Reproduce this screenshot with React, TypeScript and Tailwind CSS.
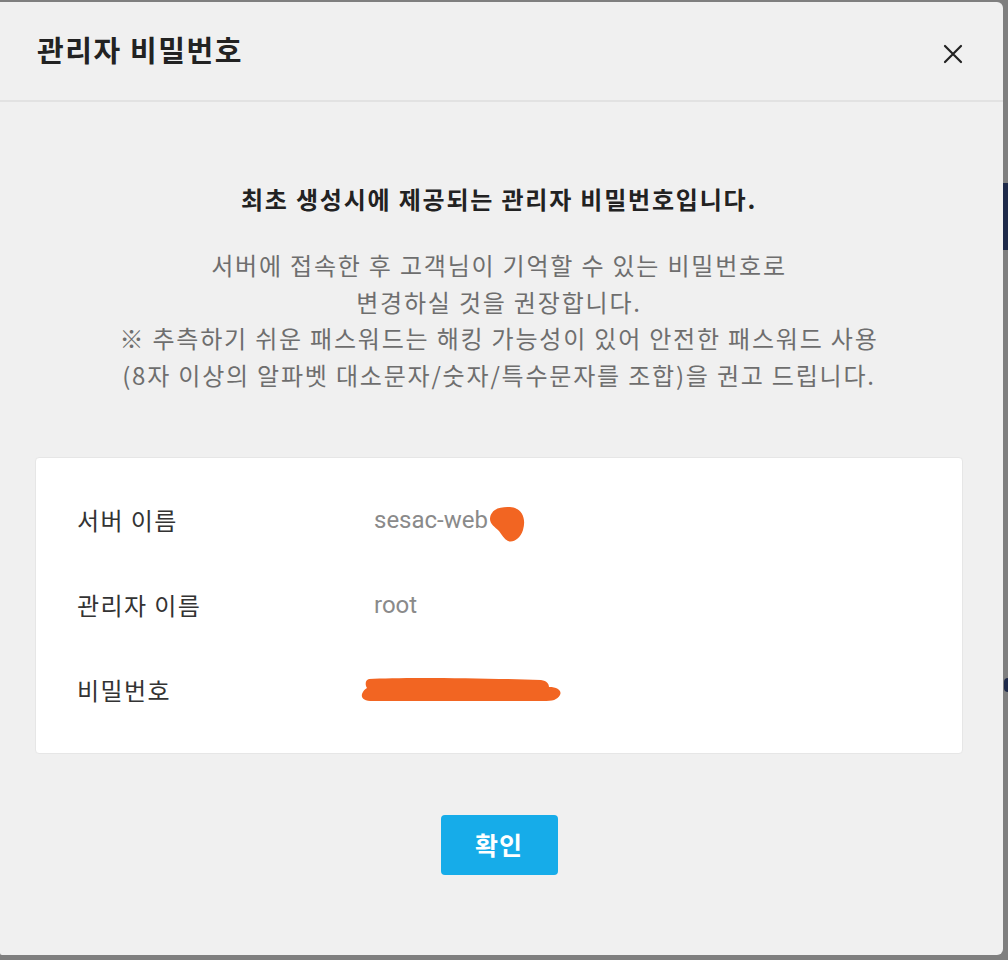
import React from "react";

const KR = { fontFamily: '"Noto Sans CJK KR", "Noto Sans", sans-serif' };
const RB = { fontFamily: 'Roboto, "Noto Sans CJK KR", sans-serif' };

function Row({ label, children }: { label: string; children: React.ReactNode }) {
  return (
    <div className="flex h-[85px] items-center">
      <div className="w-[297px] text-[24px] tracking-[1.4px] text-[#333333]" style={KR}>
        {label}
      </div>
      <div className="relative flex-1 text-[24px] text-[#8a8a8a]" style={RB}>
        {children}
      </div>
    </div>
  );
}

export default function App() {
  return (
    <div className="relative h-[960px] w-[1008px] overflow-hidden bg-[#7f7f7f]">
      {/* hints of the page behind */}
      <div className="absolute right-0 top-[183px] h-[67px] w-[5px] bg-[#1e2a4a]" />
      <div className="absolute right-0 top-[678px] h-[14px] w-[4px] rounded-l-full bg-[#1e2a4a]" />
      <div className="mt-[2px] flex h-[953px] w-[1003px] flex-col rounded-r-[6px] rounded-bl-[2px] bg-[#f0f0f0]">
        <div className="flex h-[100px] shrink-0 items-center justify-between border-b-2 border-[#e2e2e2] pl-[37px] pr-[40px]">
          <div className="pb-[2px] text-[29px] font-bold tracking-[1.6px] text-[#222222]" style={KR}>
            관리자 비밀번호
          </div>
          <svg width="20" height="20" viewBox="0 0 20 20" className="mt-[6px]">
            <path d="M2 2 L18 18 M18 2 L2 18" stroke="#222" strokeWidth="2.2" strokeLinecap="round" />
          </svg>
        </div>
        <div className="flex flex-col items-center pl-[35px] pr-[40px] pt-[79px]">
          <div className="h-[36px] text-[24px] font-bold leading-[36px] tracking-[1.8px] text-[#222222]" style={KR}>
            최초 생성시에 제공되는 관리자 비밀번호입니다.
          </div>
          <div className="mt-[30px] text-center text-[24px] leading-[36.5px] tracking-[1.8px] text-[#6e6e6e]" style={KR}>
            <div>서버에 접속한 후 고객님이 기억할 수 있는 비밀번호로</div>
            <div>변경하실 것을 권장합니다.</div>
            <div>※ 추측하기 쉬운 패스워드는 해킹 가능성이 있어 안전한 패스워드 사용</div>
            <div>(8자 이상의 알파벳 대소문자/숫자/특수문자를 조합)을 권고 드립니다.</div>
          </div>
          <div className="mt-[64px] w-full rounded-[4px] border border-[#e6e6e6] bg-white pb-[21px] pl-[41px] pt-[19px]">
            <Row label="서버 이름">
              <span>sesac-web</span>
              <svg className="absolute left-[112px] top-[2px]" width="42" height="42" viewBox="0 0 42 42">
                <path
                  d="M6 9 C9 3 22 2 29 4 C37 7 40 16 37 26 C34 35 27 39 22 37 C18 35 16 31 13 27 C9 23 4 20 4 15 C4 12 5 10 6 9 Z"
                  fill="#f26522"
                />
              </svg>
            </Row>
            <Row label="관리자 이름">
              <span>root</span>
            </Row>
            <Row label="비밀번호">
              <span className="invisible">password</span>
              <svg className="absolute left-[-13px] top-[3px]" width="204" height="28" viewBox="0 0 204 28">
                <path
                  d="M8 4 C40 2 120 3 180 5 C186 6 188 9 188 12 C197 12 201 16 199 20 C196 25 192 26 182 26 L12 26 C3 26 0 23 1 19 C2 16 4 14 6 13 C4 10 4 5 8 4 Z"
                  fill="#f26522"
                />
              </svg>
            </Row>
          </div>
          <button
            className="mt-[61px] flex h-[60px] w-[117px] items-center justify-center rounded-[4px] bg-[#16ace9] text-[25px] font-bold tracking-[1px] text-white"
            style={KR}
          >
            확인
          </button>
        </div>
      </div>
    </div>
  );
}
